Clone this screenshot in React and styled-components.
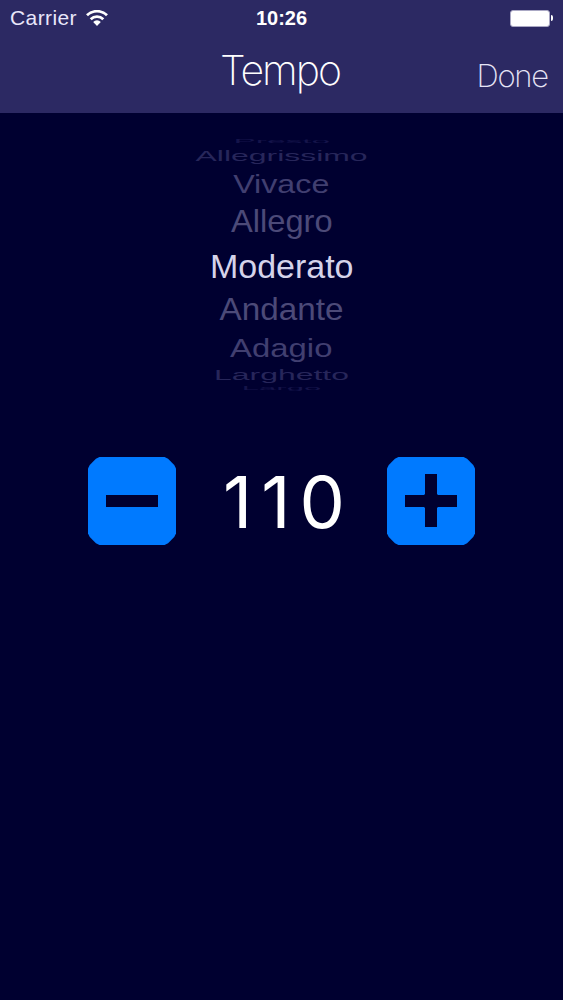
import styled, { createGlobalStyle } from 'styled-components'

const tempos = [
  { name: 'Presto', height: 8, size: 31, x: 1.08, y: 0.2, color: '#15144a' },
  { name: 'Allegrissimo', height: 22, size: 31, x: 1.03, y: 0.48, color: '#27265a' },
  { name: 'Vivace', height: 34, size: 31, x: 1.04, y: 0.85, color: '#413f70' },
  { name: 'Allegro', height: 42, size: 32, x: 1.02, y: 0.98, color: '#4c4a78' },
  { name: 'Moderato', height: 46, size: 33, x: 1.03, y: 1, color: '#d5d3ea' },
  { name: 'Andante', height: 42, size: 32, x: 1.04, y: 0.98, color: '#4c4a78' },
  { name: 'Adagio', height: 34, size: 31, x: 1.06, y: 0.85, color: '#413f70' },
  { name: 'Larghetto', height: 20, size: 31, x: 1.03, y: 0.46, color: '#27265a' },
  { name: 'Largo', height: 6, size: 31, x: 1, y: 0.18, color: '#15144a' },
]

function App() {
  return (
    <Screen>
      <GlobalStyle />
      <Header>
        <StatusBar>
          <Carrier>
            <StatusText>Carrier</StatusText>
            <svg width="22" height="16" viewBox="0 0 22 16" fill="none" stroke="#fff" strokeWidth="2.8">
              <path d="M1 5.3a14.3 14.3 0 0 1 20 0M4.7 9.2a9 9 0 0 1 12.6 0" />
              <path d="M7.2 11.9a5.2 5.2 0 0 1 7.6 0L11 15.9z" fill="#fff" stroke="none" />
            </svg>
          </Carrier>
          <Clock>10:26</Clock>
          <Battery>
            <BatteryBody />
            <BatteryTip />
          </Battery>
        </StatusBar>
        <NavBar>
          <Title>Tempo</Title>
          <DoneButton>Done</DoneButton>
        </NavBar>
      </Header>

      <Picker>
        {tempos.map(tempo => (
          <PickerRow key={tempo.name} $height={tempo.height}>
            <PickerText $size={tempo.size} $x={tempo.x} $y={tempo.y} $color={tempo.color}>{tempo.name}</PickerText>
          </PickerRow>
        ))}
      </Picker>

      <Stepper>
        <StepButton aria-label="Slower">
          <svg width="88" height="88" fill="#000030"><path d="M18 38h52v12H18z" /></svg>
        </StepButton>
        <Bpm>110</Bpm>
        <StepButton aria-label="Faster">
          <svg width="88" height="88" fill="#000030"><path d="M18 38h19l1-1V17h12v20l1 1h19v12H51l-1 1v19H38V51l-1-1H18z" /></svg>
        </StepButton>
      </Stepper>
    </Screen>
  )
}

export default App

const GlobalStyle = createGlobalStyle`
  body {
    margin: 0;
    background-color: #000030;
  }
`

const Screen = styled.div`
  width: 563px;
  height: 1000px;
  overflow: hidden;
  background-color: #000030;
  color: white;
  font-family: 'Liberation Sans', sans-serif;
`

const Header = styled.header`
  height: 113px;
  background-color: #2c2963;
`

const StatusBar = styled.div`
  display: grid;
  grid-template-columns: 1fr auto 1fr;
  align-items: center;
  height: 36px;
  padding: 0 10px;
`

const Carrier = styled.div`
  display: flex;
  align-items: center;
  gap: 9px;
`

const StatusText = styled.span`
  font-size: 21px;
  letter-spacing: 0.4px;
  color: #e8e6fa;
`

const Clock = styled.span`
  font-size: 20px;
  font-weight: 700;
`

const Battery = styled.div`
  display: flex;
  align-items: center;
  justify-content: flex-end;
  gap: 1px;
`

const BatteryBody = styled.span`
  box-sizing: border-box;
  width: 40px;
  height: 17px;
  border: 1px solid #aaa8c4;
  border-radius: 3px;
  background-color: white;
`

const BatteryTip = styled.span`
  width: 2px;
  height: 6px;
  border-radius: 0 2px 2px 0;
  background-color: white;
`

const NavBar = styled.div`
  display: grid;
  grid-template-columns: 1fr auto 1fr;
  align-items: center;
  height: 77px;
  padding: 0 15px;
`

const Title = styled.h1`
  grid-column: 2;
  margin: 0;
  padding: 0 3px 10px 0;
  font-family: Inter, sans-serif;
  font-size: 41px;
  font-weight: 200;
  letter-spacing: -2px;
`

const DoneButton = styled.button`
  justify-self: end;
  padding: 2px 0 0;
  border: 0;
  background: none;
  color: #e6e4f6;
  font-family: Inter, sans-serif;
  font-size: 31px;
  font-weight: 200;
  letter-spacing: -1.2px;
`

const Picker = styled.div`
  display: flex;
  flex-direction: column;
  height: 258px;
  margin-top: 24px;
`

const PickerRow = styled.div`
  display: flex;
  flex-shrink: 0;
  align-items: center;
  justify-content: center;
  height: ${props => props.$height}px;
`

const PickerText = styled.span`
  font-size: ${props => props.$size}px;
  line-height: 1;
  color: ${props => props.$color};
  transform: translateY(-0.5px) scale(${props => props.$x}, ${props => props.$y});
`

const Stepper = styled.div`
  display: flex;
  align-items: center;
  justify-content: space-between;
  height: 88px;
  margin-top: 62px;
  padding: 0 88px;
`

const StepButton = styled.button`
  width: 88px;
  height: 88px;
  padding: 0;
  border: 0;
  background-color: #007aff;
  clip-path: polygon(
    13% 0, 87% 0, 91% 2%, 98% 9%, 100% 13%, 100% 87%, 98% 91%, 91% 98%,
    87% 100%, 13% 100%, 9% 98%, 2% 91%, 0 87%, 0 13%, 2% 9%, 9% 2%
  );
`

const Bpm = styled.span`
  padding: 2px 0 0 14px;
  font-family: Inter, sans-serif;
  font-size: 72px;
  letter-spacing: 9px;
  line-height: 1;
`
